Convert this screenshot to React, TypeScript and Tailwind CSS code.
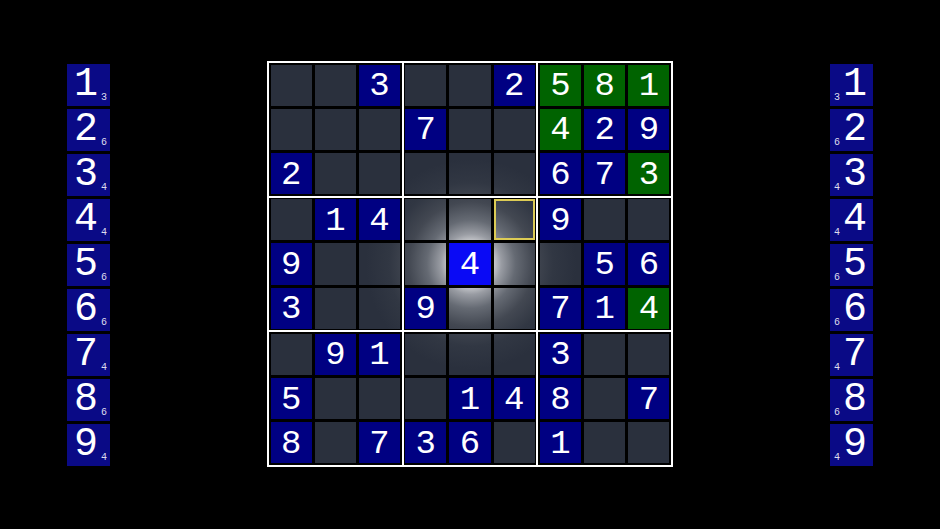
import React from "react";

type Kind = "e" | "b" | "g" | "s" | "y";
type Cell = [Kind, string];

const rows: string[][] = [
  ["e", "e", "b3", "e", "e", "b2", "g5", "g8", "g1"],
  ["e", "e", "e", "b7", "e", "e", "g4", "b2", "b9"],
  ["b2", "e", "e", "e", "e", "e", "b6", "b7", "g3"],
  ["e", "b1", "b4", "e", "e", "y", "b9", "e", "e"],
  ["b9", "e", "e", "e", "s4", "e", "e", "b5", "b6"],
  ["b3", "e", "e", "b9", "e", "e", "b7", "b1", "g4"],
  ["e", "b9", "b1", "e", "e", "e", "b3", "e", "e"],
  ["b5", "e", "e", "e", "b1", "b4", "b8", "e", "b7"],
  ["b8", "e", "b7", "b3", "b6", "e", "b1", "e", "e"],
];

const board: Cell[][] = rows.map((r) => r.map((s) => [s[0] as Kind, s.slice(1)]));

const counts = ["3", "6", "4", "4", "6", "6", "4", "6", "4"];

const mono = { fontFamily: '"Liberation Mono", "DejaVu Sans Mono", monospace' };

function CellView({ cell }: { cell: Cell }) {
  const [kind, val] = cell;
  const glow =
    "bg-fixed bg-[radial-gradient(circle_at_471px_264px,#f0f0f0_0px,#d6d7da_20px,#999ca3_30px,#656a73_44px,#434852_62px,#313743_82px,#2a303d_105px)]";
  let cls = "";
  if (kind === "e") cls = glow;
  else if (kind === "y") cls = glow + " border-2 border-[#dccb55]";
  else if (kind === "b") cls = "bg-[#000082]";
  else if (kind === "g") cls = "bg-[#006300]";
  else if (kind === "s") cls = "bg-[#0a0af5]";
  return (
    <div className={`flex items-center justify-center text-white text-[34px] leading-none ${cls}`} style={mono}>
      <span className="inline-block translate-y-[1px]">{val}</span>
    </div>
  );
}

function Block({ br, bc }: { br: number; bc: number }) {
  const cells: React.ReactNode[] = [];
  for (let i = 0; i < 3; i++)
    for (let j = 0; j < 3; j++)
      cells.push(<CellView key={`${i}-${j}`} cell={board[br * 3 + i][bc * 3 + j]} />);
  return <div className="bg-black p-[1.5px] grid grid-cols-3 grid-rows-3 gap-[3px]">{cells}</div>;
}

function Tile({ n, c, side }: { n: number; c: string; side: "l" | "r" }) {
  return (
    <div className="w-[43px] h-[42px] bg-[#0a0a86] relative text-white" style={mono}>
      <span
        className={`absolute top-0 text-[40px] leading-[42px] ${side === "l" ? "left-[7px]" : "left-[13px]"}`}
      >
        {n}
      </span>
      <span
        className={`absolute bottom-[3px] text-[10px] leading-none text-[#dde] ${
          side === "l" ? "left-[34px]" : "left-[4px]"
        }`}
      >
        {c}
      </span>
    </div>
  );
}

function Column({ side }: { side: "l" | "r" }) {
  return (
    <div className="mt-[3px] flex flex-col gap-[3px]">
      {counts.map((c, i) => (
        <Tile key={i} n={i + 1} c={c} side={side} />
      ))}
    </div>
  );
}

export default function App() {
  const blocks: React.ReactNode[] = [];
  for (let br = 0; br < 3; br++) for (let bc = 0; bc < 3; bc++) blocks.push(<Block key={`${br}${bc}`} br={br} bc={bc} />);
  return (
    <div className="w-[940px] h-[529px] bg-black flex justify-center items-start gap-[157px] pt-[61px] overflow-hidden">
      <Column side="l" />
      <div className="w-[406px] h-[406px] bg-white p-[2px] grid grid-cols-3 grid-rows-3 gap-[2px]">{blocks}</div>
      <Column side="r" />
    </div>
  );
}
